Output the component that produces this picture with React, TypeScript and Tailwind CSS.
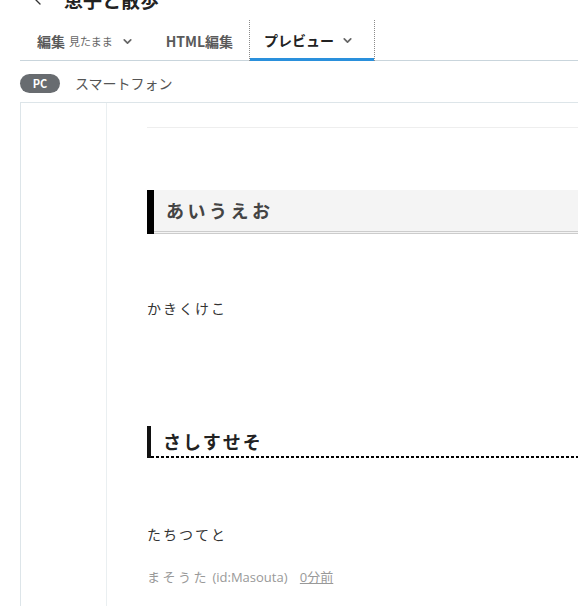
import { ChevronDown, ChevronLeft } from "lucide-react";

export default function App() {
  return (
    <div className="h-[606px] w-[578px] overflow-hidden bg-white font-['Noto_Sans_CJK_JP',sans-serif]">
      {/* title (scrolled partly out of view) */}
      <div className="-mt-[11px] flex h-[22px] items-center gap-[18px] pl-[30px]">
        <ChevronLeft size={16} strokeWidth={2} className="text-[#333]" />
        <span className="text-[19px] font-bold leading-[22px] text-[#222]">恵子と散歩</span>
      </div>

      {/* tabs */}
      <div className="ml-[20px] mt-[9px] flex h-[41px] items-stretch border-b border-[#c9d5dc]">
        <div className="flex items-center gap-1 pl-[17px] pr-[16px] pt-[3px] text-[#5a5a5a]">
          <span className="text-[14px] font-bold">編集</span>
          <span className="text-[11px] text-[#666]">見たまま</span>
          <ChevronDown size={13} strokeWidth={3.2} className="ml-1 text-[#666]" />
        </div>
        <div className="flex items-center pl-[16px] pr-[16px] pt-[3px] text-[#5a5a5a]">
          <span className="text-[14px] font-bold">HTML編集</span>
        </div>
        <div className="-mb-px flex w-[126px] flex-col border-x border-dotted border-[#8a8a8a]">
          <div className="flex flex-1 items-center pl-[14px] pt-[3px] text-[#222]">
            <span className="text-[14px] font-bold">プレビュー</span>
            <ChevronDown size={13} strokeWidth={3.2} className="ml-[7px] text-[#666]" />
          </div>
          <div className="h-[3px] bg-[#2a90dc]" />
        </div>
      </div>

      {/* device switch */}
      <div className="ml-[20px] mt-[12px] flex items-center gap-[15px]">
        <span className="flex h-[19px] w-[40px] items-center justify-center rounded-full bg-[#686c70] text-[11px] font-bold text-white">
          PC
        </span>
        <span className="text-[14px] text-[#555]">スマートフォン</span>
      </div>

      {/* preview frame */}
      <div className="ml-[20px] mt-[8px] flex h-[520px] border-l border-t border-[#dde5e9]">
        <div className="w-[86px] shrink-0 border-r border-[#eaeff1]" />
        <div className="min-w-0 flex-1 overflow-hidden">
          <div className="w-[700px] pl-[40px]">
            <div className="mt-[24px] border-t border-[#eeeeee]" />

            <div className="mt-[62px] flex h-[44px]">
              <div className="w-[7px] bg-black" />
              <h2 className="flex flex-1 items-center border-b-[3px] border-double border-[#cccccc] bg-[#f4f4f4] pl-[12px] text-[18px] font-bold tracking-[3.5px] text-[#444]">
                あいうえお
              </h2>
            </div>

            <p className="mt-[64px] text-[14px] tracking-[2px] text-[#333]">かきくけこ</p>

            <div className="mt-[107px] flex h-[32px]">
              <div className="w-[4px] bg-[#111]" />
              <div className="flex flex-1 flex-col">
                <h2 className="flex flex-1 items-center pl-[12px] text-[18px] font-bold tracking-[2px] text-[#222]">
                  さしすせそ
                </h2>
                <div className="h-[2px] bg-[linear-gradient(to_right,#000_3px,transparent_3px)] bg-[length:5px_2px] bg-repeat-x" />
              </div>
            </div>

            <p className="mt-[66px] text-[14px] tracking-[2px] text-[#333]">たちつてと</p>

            <p className="mt-[23px] font-['Open_Sans','Noto_Sans_CJK_JP',sans-serif] text-[13px] text-[#999]">
              <span className="tracking-[2.5px]">まそうた</span> (id:Masouta) <span className="ml-[9px] underline">0分前</span>
            </p>
          </div>
        </div>
      </div>
    </div>
  );
}
